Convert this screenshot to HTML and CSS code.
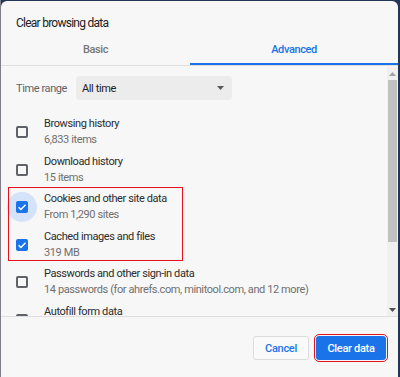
FILE: index.html
```html
<!DOCTYPE html>
<html>
<head>
<meta charset="utf-8">
<link rel="stylesheet" href="styles.css">
</head>
<body>
<div class="dialog">
  <div class="title">Clear browsing data</div>
  <div class="tabs">
    <div class="tab">Basic</div>
    <div class="tab active">Advanced</div>
  </div>
  <div class="body">
    <div class="list">
      <div class="range">
        <span class="range-label">Time range</span>
        <div class="select">
          <span>All time</span>
          <svg class="caret" width="7" height="4" viewBox="0 0 7 4"><path d="M0 0h7L3.5 4z" fill="#5a5a5a"/></svg>
        </div>
      </div>
      <div class="item">
        <span class="box"></span>
        <div class="text"><div class="main">Browsing history</div><div class="sub">6,833 items</div></div>
      </div>
      <div class="item">
        <span class="box"></span>
        <div class="text"><div class="main">Download history</div><div class="sub">15 items</div></div>
      </div>
      <div class="item">
        <span class="box checked focus"><svg width="12" height="12" viewBox="0 0 12 12"><path d="M2.6 6.2l2.3 2.3 4.6-4.8" fill="none" stroke="#fff" stroke-width="1.4"/></svg></span>
        <div class="text"><div class="main">Cookies and other site data</div><div class="sub">From 1,290 sites</div></div>
      </div>
      <div class="item">
        <span class="box checked"><svg width="12" height="12" viewBox="0 0 12 12"><path d="M2.6 6.2l2.3 2.3 4.6-4.8" fill="none" stroke="#fff" stroke-width="1.4"/></svg></span>
        <div class="text"><div class="main">Cached images and files</div><div class="sub">319 MB</div></div>
      </div>
      <div class="item">
        <span class="box"></span>
        <div class="text"><div class="main">Passwords and other sign-in data</div><div class="sub">14 passwords (for ahrefs.com, minitool.com, and 12 more)</div></div>
      </div>
      <div class="item">
        <span class="box"></span>
        <div class="text"><div class="main">Autofill form data</div><div class="sub">&nbsp;</div></div>
      </div>
      <div class="highlight"></div>
    </div>
    <div class="scrollbar">
      <div class="sb-btn"><svg width="7" height="4" viewBox="0 0 7 4"><path d="M3.5 0L7 4H0z" fill="#a3a3a3"/></svg></div>
      <div class="track"><div class="thumb"></div></div>
      <div class="sb-btn"><svg width="7" height="4" viewBox="0 0 7 4"><path d="M0 0h7L3.5 4z" fill="#505050"/></svg></div>
    </div>
  </div>
  <div class="footer">
    <button class="btn cancel">Cancel</button>
    <button class="btn primary">Clear data</button>
  </div>
</div>
</body>
</html>
```
FILE: styles.css
```css
html, body {
  margin: 0;
  padding: 0;
}
body {
  width: 400px;
  height: 377px;
  overflow: hidden;
  background: linear-gradient(to right, #7e7e86 0 1px, #25355a 1px);
  font-family: Roboto, "Liberation Sans", sans-serif;
}
.dialog {
  margin: 1px 0 0 1px;
  width: 397px;
  height: 376px;
  background: #f7f7f7;
  border-radius: 6px 6px 0 0;
  display: flex;
  flex-direction: column;
  overflow: hidden;
}
.title {
  padding: 14px 0 0 15px;
  font-size: 12px;
  letter-spacing: -0.75px;
  line-height: 16px;
  color: #222;
}
.tabs {
  display: grid;
  grid-template-columns: 189px 1fr;
  border-bottom: 1px solid #dedede;
}
.tab {
  padding: 11px 0 5px;
  line-height: 16px;
  font-size: 11px;
  letter-spacing: -0.4px;
  font-weight: 500;
  text-align: center;
  color: #767676;
  border-bottom: 2px solid transparent;
}
.tab.active {
  color: #1a73e8;
  border-bottom-color: #1a73e8;
}
.body {
  height: 250px;
  display: flex;
  border-bottom: 1px solid #dedede;
}
.list {
  flex: 1;
  position: relative;
  overflow: hidden;
}
.range {
  display: flex;
  align-items: center;
  margin-top: 10px;
  padding-left: 15px;
  gap: 9px;
  font-size: 11px;
  letter-spacing: -0.4px;
}
.range-label {
  color: #5f6368;
}
.select {
  width: 156px;
  height: 24px;
  box-sizing: border-box;
  background: #ececec;
  border-radius: 4px;
  display: flex;
  align-items: center;
  justify-content: space-between;
  padding: 0 8px 0 6px;
  color: #222;
}
.caret {
  display: block;
}
.range + .item {
  margin-top: 13px;
}
.item {
  height: 37.5px;
  box-sizing: border-box;
  padding: 3px 0 0 15px;
  display: flex;
  align-items: flex-start;
  gap: 16px;
}
.box {
  position: relative;
  width: 12px;
  height: 12px;
  box-sizing: border-box;
  border: 2px solid #5f6368;
  border-radius: 2px;
  margin-top: 10px;
  flex: none;
}
.box.checked {
  border: none;
  background: #1a73e8;
}
.box svg {
  position: relative;
  display: block;
  z-index: 1;
}
.box.checked.focus {
  background: none;
}
.box.checked.focus::before {
  content: "";
  position: absolute;
  left: -9px;
  top: -9px;
  width: 30px;
  height: 30px;
  border-radius: 50%;
  background: #d4e3fa;
  z-index: 0;
}
.box.checked.focus::after {
  content: "";
  position: absolute;
  inset: 0;
  background: #1a73e8;
  border-radius: 2px;
  z-index: 0;
}
.text {
  font-size: 11px;
  letter-spacing: -0.4px;
  line-height: 16px;
}
.main {
  color: #2b2b2b;
}
.sub {
  color: #6f6f6f;
}
.highlight {
  position: absolute;
  left: 7px;
  top: 121px;
  width: 175px;
  height: 74px;
  box-sizing: border-box;
  border: 1.5px solid #e3121b;
  pointer-events: none;
}
.scrollbar {
  width: 11px;
  background: #f0f0f0;
  display: flex;
  flex-direction: column;
  margin: 1px 0 0 0;
}
.sb-btn {
  height: 13px;
  display: flex;
  align-items: center;
  justify-content: center;
}
.track {
  flex: 1;
  padding: 0 1px;
}
.thumb {
  height: 162px;
  background: #c1c1c1;
}
.footer {
  flex: 1;
  display: flex;
  justify-content: flex-end;
  align-items: flex-start;
  padding: 19px 12px 0 0;
  gap: 7px;
}
.btn {
  height: 24px;
  border-radius: 3px;
  font-family: Roboto, "Liberation Sans", sans-serif;
  font-size: 11px;
  letter-spacing: -0.3px;
  font-weight: 500;
  padding: 0;
  cursor: pointer;
}
.cancel {
  width: 56px;
  background: #fafafa;
  border: 1px solid #dadce0;
  color: #1a73e8;
}
.primary {
  width: 70px;
  background: #1a73e8;
  border: none;
  color: #fff;
  outline: 1.5px solid #e3121b;
  outline-offset: 1px;
}
```
